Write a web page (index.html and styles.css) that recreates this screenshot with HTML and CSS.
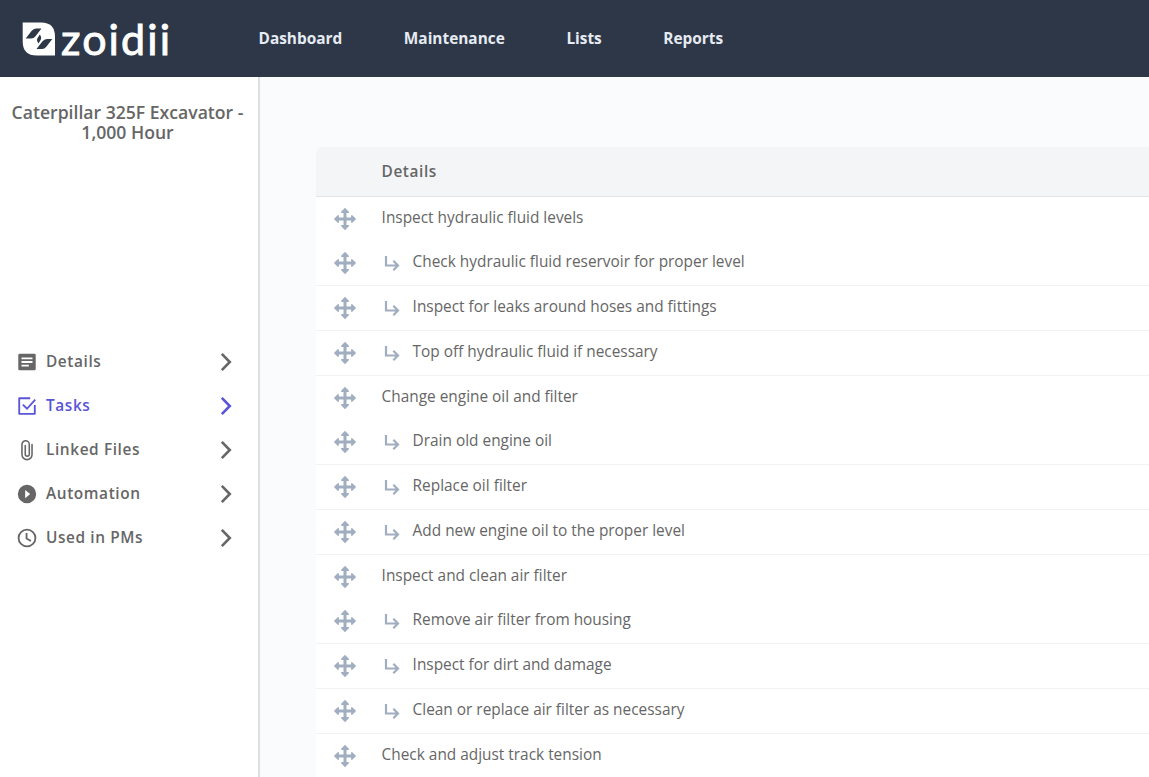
FILE: index.html
```html
<!doctype html>
<html lang="en">
  <head>
    <meta charset="UTF-8" />
    <meta name="viewport" content="width=device-width, initial-scale=1.0" />
    <title>Zoidii - Tasks</title>
    <link rel="stylesheet" href="styles.css">
  </head>
  <body>
    <!-- Shared icons -->
    <svg class="icon-defs" aria-hidden="true">
      <symbol id="icon-move" viewBox="0 0 22 22">
        <path fill="none" stroke="currentColor" stroke-width="3" d="M11 3v16M3 11h16"/>
        <path fill="currentColor" stroke="currentColor" stroke-width="1.4" stroke-linejoin="round" d="M11 .8l3.300 3.400H7.700zM11 21.200l3.300-3.400H7.700zM.8 11l3.400-3.300v6.600zM21.200 11l-3.400-3.300v6.600z"/>
      </symbol>
      <symbol id="icon-sub" viewBox="0 0 16 16">
        <path fill="none" stroke="currentColor" stroke-width="2.200" d="M2 0v9.500h11.500M9.300 4.800L14 9.500l-4.700 4.700"/>
      </symbol>
      <symbol id="icon-chevron" viewBox="0 0 12 20">
        <path fill="none" stroke="currentColor" stroke-width="2.6" d="M1.800 1.800L9.800 10l-8 8.200"/>
      </symbol>
    </svg>

    <header class="topbar">
      <a class="logo" href="#">
        <svg width="160" height="50" viewBox="0 0 160 50">
          <path fill="#fff" d="M.7 8.500h18.300q14 0 14 14V41.500H14.700q-14 0-14-14z"/>
          <path fill="#2d3748" d="M3.700 24.500L9.500 17q2-2.500 4.500-2.500h5.500L13.700 22q-2 2.500-4.500 2.500zM14.500 35L20.300 27.500q2-2.500 4.500-2.500h5.500L24.500 32.500q-2 2.500-4.500 2.500z"/>
          <path fill="#2d3748" d="M17.800 20.500q2.200 3 .8 5.500t-2.200 3.500q-2.300-3.500-.8-5.500z"/>
          <text class="logo-text" x="39" y="40.500" textLength="109" lengthAdjust="spacing">zoidii</text>
        </svg>
      </a>
      <nav class="main-nav">
        <a href="#">Dashboard</a>
        <a href="#">Maintenance</a>
        <a href="#">Lists</a>
        <a href="#">Reports</a>
      </nav>
    </header>

    <div class="layout">
      <aside class="sidebar">
        <h1>Caterpillar 325F Excavator - 1,000 Hour</h1>
        <nav class="side-nav">
          <a class="side-item" href="#">
            <svg class="side-icon" viewBox="0 0 24 24"><path fill="currentColor" fill-rule="evenodd" d="M20 3H4a1.500 1.500 0 0 0-1.500 1.500v15A1.500 1.500 0 0 0 4 21h16a1.500 1.500 0 0 0 1.500-1.500v-15A1.500 1.500 0 0 0 20 3zM6 7h12v2H6zm0 4h12v2H6zm0 4h8v2H6z"/></svg>
            <span>Details</span>
            <svg class="chevron"><use href="#icon-chevron"/></svg>
          </a>
          <a class="side-item active" href="#">
            <svg class="side-icon" viewBox="0 0 24 24"><path fill="none" stroke="currentColor" stroke-width="2" stroke-linejoin="round" d="M15.500 3.500H3.500v17h17V11"/><path fill="none" stroke="currentColor" stroke-width="2" d="M7.500 10.500l4.500 4.500L21 5"/></svg>
            <span>Tasks</span>
            <svg class="chevron"><use href="#icon-chevron"/></svg>
          </a>
          <a class="side-item" href="#">
            <svg class="side-icon" viewBox="0 0 24 24"><path fill="none" stroke="currentColor" stroke-width="1.700" stroke-linecap="round" d="M17.500 6v11a5.500 5.500 0 0 1-11 0V6a4 4 0 0 1 8 0v10.500a2.200 2.200 0 0 1-4.400 0V7"/></svg>
            <span>Linked Files</span>
            <svg class="chevron"><use href="#icon-chevron"/></svg>
          </a>
          <a class="side-item" href="#">
            <svg class="side-icon" viewBox="0 0 24 24"><path fill="currentColor" fill-rule="evenodd" d="M12 2a10 10 0 1 0 0 20 10 10 0 0 0 0-20zM10 7.500l5.500 4.500-5.500 4.500z"/></svg>
            <span>Automation</span>
            <svg class="chevron"><use href="#icon-chevron"/></svg>
          </a>
          <a class="side-item" href="#">
            <svg class="side-icon" viewBox="0 0 24 24"><circle cx="12" cy="12" r="9.200" fill="none" stroke="currentColor" stroke-width="2"/><path fill="none" stroke="currentColor" stroke-width="2" d="M11.500 6.500v6l4.800 2.800"/></svg>
            <span>Used in PMs</span>
            <svg class="chevron"><use href="#icon-chevron"/></svg>
          </a>
        </nav>
      </aside>

      <main class="content">
        <div class="task-table">
          <div class="table-head">Details</div>
          <div class="row"><svg class="move"><use href="#icon-move"/></svg><span>Inspect hydraulic fluid levels</span></div>
          <div class="row sub"><svg class="move"><use href="#icon-move"/></svg><svg class="sub-icon"><use href="#icon-sub"/></svg><span>Check hydraulic fluid reservoir for proper level</span></div>
          <div class="row sub"><svg class="move"><use href="#icon-move"/></svg><svg class="sub-icon"><use href="#icon-sub"/></svg><span>Inspect for leaks around hoses and fittings</span></div>
          <div class="row sub"><svg class="move"><use href="#icon-move"/></svg><svg class="sub-icon"><use href="#icon-sub"/></svg><span>Top off hydraulic fluid if necessary</span></div>
          <div class="row"><svg class="move"><use href="#icon-move"/></svg><span>Change engine oil and filter</span></div>
          <div class="row sub"><svg class="move"><use href="#icon-move"/></svg><svg class="sub-icon"><use href="#icon-sub"/></svg><span>Drain old engine oil</span></div>
          <div class="row sub"><svg class="move"><use href="#icon-move"/></svg><svg class="sub-icon"><use href="#icon-sub"/></svg><span>Replace oil filter</span></div>
          <div class="row sub"><svg class="move"><use href="#icon-move"/></svg><svg class="sub-icon"><use href="#icon-sub"/></svg><span>Add new engine oil to the proper level</span></div>
          <div class="row"><svg class="move"><use href="#icon-move"/></svg><span>Inspect and clean air filter</span></div>
          <div class="row sub"><svg class="move"><use href="#icon-move"/></svg><svg class="sub-icon"><use href="#icon-sub"/></svg><span>Remove air filter from housing</span></div>
          <div class="row sub"><svg class="move"><use href="#icon-move"/></svg><svg class="sub-icon"><use href="#icon-sub"/></svg><span>Inspect for dirt and damage</span></div>
          <div class="row sub"><svg class="move"><use href="#icon-move"/></svg><svg class="sub-icon"><use href="#icon-sub"/></svg><span>Clean or replace air filter as necessary</span></div>
          <div class="row"><svg class="move"><use href="#icon-move"/></svg><span>Check and adjust track tension</span></div>
        </div>
      </main>
    </div>
  </body>
</html>
```
FILE: styles.css
```css
* {
  box-sizing: border-box;
}
body {
  margin: 0;
  height: 100vh;
  overflow: hidden;
  display: flex;
  flex-direction: column;
  font-family: 'Open Sans', 'Noto Sans', sans-serif;
  font-size: 15.4px;
  color: #666;
  background-color: #fafbfd;
}
a {
  color: inherit;
  text-decoration: none;
}
svg {
  display: block;
  flex-shrink: 0;
}
.icon-defs {
  display: none;
}
.topbar {
  display: flex;
  align-items: center;
  flex-shrink: 0;
  height: 77px;
  padding-left: 22px;
  background-color: #2d3748;
}
.logo {
  width: 236.5px;
}
.logo-text {
  font-family: Lato, sans-serif;
  font-size: 43px;
  fill: #fff;
  stroke: #fff;
  stroke-width: 0.9px;
}
.main-nav {
  display: flex;
  gap: 61.6px;
  color: #e6ebf2;
  font-weight: 700;
}
.layout {
  display: flex;
  flex: 1;
  min-height: 0;
}
.sidebar {
  width: 260px;
  flex-shrink: 0;
  padding: 25px 3px 0 0;
  background-color: #fff;
  border-right: 2px solid #dcdee2;
}
.sidebar h1 {
  margin: 0;
  height: 238px;
  font-size: 17.6px;
  font-weight: 600;
  line-height: 20px;
  text-align: center;
}
.side-item {
  display: flex;
  align-items: center;
  height: 44px;
  padding: 0 23px 0 15.6px;
  font-weight: 600;
  letter-spacing: 0.6px;
}
.side-item span {
  padding-bottom: 2px;
}
.side-item.active {
  color: #5a55d6;
}
.side-icon {
  width: 22px;
  height: 22px;
  margin-right: 8.4px;
}
.chevron {
  width: 12px;
  height: 20px;
  margin-left: auto;
}
.content {
  flex: 1;
  padding: 70px 0 0 56px;
}
.task-table {
  background-color: #fff;
  border-top-left-radius: 6px;
  overflow: hidden;
}
.table-head {
  height: 50px;
  padding-left: 65.5px;
  line-height: 49px;
  font-weight: 600;
  letter-spacing: 0.6px;
  background-color: #f3f5f7;
  border-bottom: 1px solid #e3e6e9;
}
.row {
  display: flex;
  align-items: center;
  height: 44px;
  padding-left: 17.6px;
}
.row span {
  padding-bottom: 4px;
}
.row.sub {
  height: 45px;
  border-bottom: 1px solid #f1f2f3;
}
.move {
  width: 22px;
  height: 22px;
  margin-right: 26px;
  color: #a0aec0;
}
.sub-icon {
  width: 16px;
  height: 16px;
  margin: 1px 13px 0 2px;
  color: #a0aec0;
}
```
